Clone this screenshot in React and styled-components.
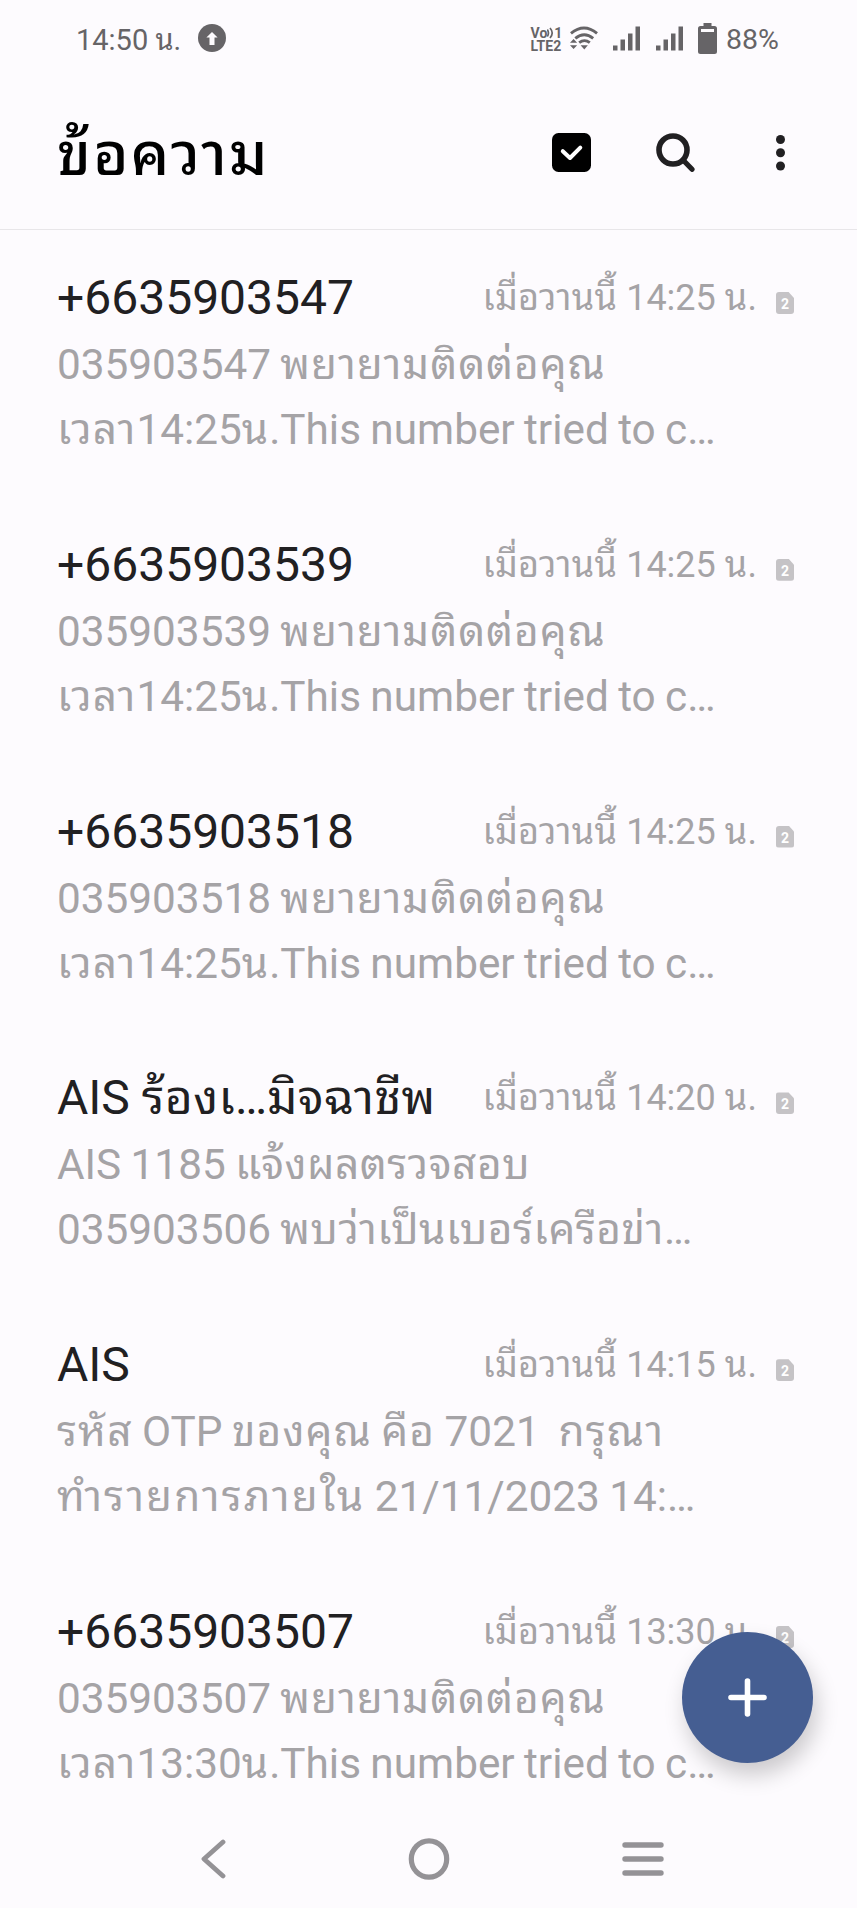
import React from "react";
import styled, { createGlobalStyle } from "styled-components";

const messages = [
  {
    name: "+6635903547",
    time: "14:25",
    lines: [
      { text: "035903547 พยายามติดต่อคุณ", tracking: 0.95 },
      { text: "เวลา14:25น.This number tried to c…", tracking: 1.05 },
    ],
  },
  {
    name: "+6635903539",
    time: "14:25",
    lines: [
      { text: "035903539 พยายามติดต่อคุณ", tracking: 0.95 },
      { text: "เวลา14:25น.This number tried to c…", tracking: 1.05 },
    ],
  },
  {
    name: "+6635903518",
    time: "14:25",
    lines: [
      { text: "035903518 พยายามติดต่อคุณ", tracking: 0.95 },
      { text: "เวลา14:25น.This number tried to c…", tracking: 1.05 },
    ],
  },
  {
    name: "AIS ร้องเ…มิจฉาชีพ",
    time: "14:20",
    lines: [
      { text: "AIS 1185 แจ้งผลตรวจสอบ", tracking: 0.55 },
      { text: "035903506 พบว่าเป็นเบอร์เครือข่า…", tracking: 0.55 },
    ],
  },
  {
    name: "AIS",
    time: "14:15",
    lines: [
      { text: "รหัส OTP ของคุณ คือ 7021  กรุณา", tracking: 1.15 },
      { text: "ทำรายการภายใน 21/11/2023 14:…", tracking: 2.1 },
    ],
  },
  {
    name: "+6635903507",
    time: "13:30",
    lines: [
      { text: "035903507 พยายามติดต่อคุณ", tracking: 0.95 },
      { text: "เวลา13:30น.This number tried to c…", tracking: 1.05 },
    ],
  },
];

const Mixed = ({ text, tracking = 0 }) =>
  text.split(/([\u0E00-\u0E7F]+)/).map((part, i) =>
    i % 2 ? <Thai key={i} $tracking={tracking}>{part}</Thai> : part
  );

const Signal = () => (
  <svg width="27" height="25" viewBox="0 0 27 25" fill="#666467">
    <rect x="0" y="19.5" width="4.5" height="5" />
    <rect x="7.5" y="13.5" width="4.5" height="11" />
    <rect x="15" y="7.5" width="4.5" height="17" />
    <rect x="22.5" y="0.5" width="4.5" height="24" />
  </svg>
);

const Wifi = () => (
  <svg width="28" height="25" viewBox="0 0 29 25" fill="none" stroke="#666467" strokeWidth="3">
    <path d="M1 7.2 Q14.5 -3.8 28 7.2" />
    <path d="M5.5 12.4 Q14.8 4.8 24 12.4" />
    <path d="M9.5 16.8 Q15 12.6 20.5 16.8" />
    <path d="M11 19.5 H18.5 L14.8 24 Z" fill="#666467" stroke="none" />
    <path d="M0 17 L3.7 13 L7.4 17 Z M0 19.5 H7.4 L3.7 23.5 Z" fill="#666467" stroke="none" />
  </svg>
);

const Volte = () => (
  <VolteBox>
    <VolteLine>
      Vo
      <svg width="7" height="12" viewBox="0 0 7 12" fill="none" stroke="#666467" strokeWidth="1.7">
        <path d="M0.3 2.5 Q2.6 6 0.3 9.5 M3 1 Q7.4 6 3 11" />
      </svg>
      <span>1</span>
    </VolteLine>
    <VolteLine>LTE2</VolteLine>
  </VolteBox>
);

const App = () => {
  return (
    <Screen>
      <GlobalStyle />
      <StatusBar>
        <Clock><Mixed text="14:50 น." /></Clock>
        <svg width="28" height="28" viewBox="0 0 28 28">
          <circle cx="14" cy="14" r="14" fill="#666467" />
          <path d="M14 8 L19.6 13.6 H16.5 V21 H11.5 V13.6 H8.4 Z" fill="#fdfbfe" />
        </svg>
        <StatusIcons>
          <Volte />
          <Wifi />
          <Signal />
          <Signal />
          <svg width="19" height="31" viewBox="0 0 19 31" fill="#666467">
            <path d="M5.5 0 H13.5 V3 H16.5 Q19 3 19 5.5 V28.5 Q19 31 16.5 31 H2.5 Q0 31 0 28.5 V5.5 Q0 3 2.5 3 H5.5 Z" />
            <rect x="3" y="6" width="13" height="3" fill="#fdfbfe" />
          </svg>
          <Battery>88%</Battery>
        </StatusIcons>
      </StatusBar>
      <Header>
        <Title>ข้อความ</Title>
        <Actions>
          <svg width="39" height="39" viewBox="0 0 39 39">
            <rect width="39" height="39" rx="6.5" fill="#000" />
            <path d="M10.8 18.2 L18 25 L28.3 14.7" fill="none" stroke="#fff" strokeWidth="4" strokeLinecap="round" strokeLinejoin="round" />
          </svg>
          <svg width="39" height="39" viewBox="0 0 39 39" fill="none" stroke="#212022">
            <circle cx="17" cy="17" r="14" strokeWidth="5.6" />
            <path d="M27.5 27.5 L36 36.3" strokeWidth="5.2" strokeLinecap="round" />
          </svg>
          <MoreIcon width="9" height="36" viewBox="0 0 9 36" fill="#212022">
            <circle cx="4.5" cy="4.5" r="4.5" />
            <circle cx="4.5" cy="17.8" r="4.5" />
            <circle cx="4.5" cy="31" r="4.5" />
          </MoreIcon>
        </Actions>
      </Header>
      <List>
        {messages.map((message) => (
          <Message key={message.name}>
            <TopLine>
              <Name><Mixed text={message.name} tracking={0.35} /></Name>
              <Time><Mixed text={`เมื่อวานนี้ ${message.time} น.`} tracking={0.3} /></Time>
              <SimBadge>2</SimBadge>
            </TopLine>
            {message.lines.map((line) => (
              <Preview key={line.text}><Mixed text={line.text} tracking={line.tracking} /></Preview>
            ))}
          </Message>
        ))}
      </List>
      <Compose>
        <svg width="39" height="39" viewBox="0 0 39 39" stroke="#fff" strokeWidth="5.6" strokeLinecap="round">
          <path d="M19.5 3 V36 M3 19.5 H36" />
        </svg>
      </Compose>
      <NavBar>
        <svg width="25" height="40" viewBox="0 0 25 40" fill="none" stroke="#949296" strokeWidth="4.8" strokeLinecap="round" strokeLinejoin="round">
          <path d="M22 3 L3 20 L22 37" />
        </svg>
        <HomeIcon width="42" height="44" viewBox="0 0 42 44" fill="none" stroke="#949296" strokeWidth="5.2">
          <ellipse cx="21" cy="22" rx="17.7" ry="18.2" />
        </HomeIcon>
        <svg width="42" height="34" viewBox="0 0 42 34" stroke="#949296" strokeWidth="5.4" strokeLinecap="round">
          <path d="M3 3 H39 M3 17 H39 M3 31 H39" />
        </svg>
      </NavBar>
    </Screen>
  );
};

const GlobalStyle = createGlobalStyle`
  *{
    box-sizing: border-box;
    margin: 0;
    padding: 0;
  }
  body{
    background: #fdfbfe;
    font-family: Roboto, "Noto Sans Thai Looped", "Noto Sans Thai", "Noto Sans", sans-serif;
  }
  svg{
    display: block;
    flex: none;
  }
`;

const Screen = styled.div`
  position: relative;
  display: flex;
  flex-direction: column;
  width: 857px;
  height: 1908px;
  overflow: hidden;
  background: #fdfbfe;
`;

const Thai = styled.span`
  letter-spacing: ${({ $tracking }) => $tracking}px;
  white-space: pre;
`;

const StatusBar = styled.div`
  display: flex;
  align-items: center;
  height: 76px;
  padding: 0 78px 0 76px;
  color: #666467;
`;

const Clock = styled.div`
  width: 122px;
  padding-top: 3px;
  font-size: 29px;
  line-height: 40px;
  white-space: pre;
`;

const StatusIcons = styled.div`
  display: flex;
  align-items: center;
  margin-left: auto;
  gap: 15.5px;
`;

const VolteBox = styled.div`
  width: 31px;
  margin-right: -7.5px;
  padding-top: 3px;
  font-size: 14px;
  font-weight: 700;
  line-height: 13px;
`;

const VolteLine = styled.div`
  display: flex;
  align-items: center;
  justify-content: space-between;
  height: 13px;
`;

const Battery = styled.div`
  margin-left: -6.5px;
  padding-top: 3px;
  font-size: 28.5px;
`;

const Header = styled.header`
  display: flex;
  align-items: center;
  height: 154px;
  padding: 0 72px 0 57px;
  border-bottom: 1px solid #e8e6e9;
`;

const Title = styled.h1`
  padding-top: 4px;
  font-size: 60px;
  font-weight: 500;
  letter-spacing: 2px;
  line-height: 80px;
  color: #000;
`;

const Actions = styled.div`
  display: flex;
  align-items: center;
  margin-left: auto;
  gap: 65px;
`;

const MoreIcon = styled.svg`
  margin-left: 16px;
`;

const List = styled.main`
  flex: 1;
  min-height: 0;
`;

const Message = styled.article`
  height: 266.8px;
  padding: 36px 63px 0 57px;
`;

const TopLine = styled.div`
  display: flex;
  align-items: center;
  height: 64px;
  margin-bottom: 2px;
`;

const Name = styled.h2`
  font-size: 48px;
  font-weight: 400;
  line-height: 64px;
  color: #212022;
  white-space: pre;
`;

const Time = styled.time`
  margin-left: auto;
  font-size: 36px;
  line-height: 60px;
  color: #a5a3a6;
  white-space: pre;
`;

const SimBadge = styled.span`
  width: 18px;
  height: 22px;
  margin: 10px 0 0 19px;
  border-radius: 3px;
  clip-path: polygon(0 0, 70% 0, 100% 27%, 100% 100%, 0 100%);
  background: #c5c3c6;
  color: #fff;
  font-size: 14px;
  font-weight: 700;
  line-height: 24px;
  text-align: center;
`;

const Preview = styled.p`
  height: 65px;
  font-size: 42.3px;
  line-height: 65px;
  word-spacing: -1.1px;
  color: #a5a3a6;
  white-space: pre;
`;

const Compose = styled.button`
  position: absolute;
  right: 44px;
  bottom: 145px;
  display: flex;
  align-items: center;
  justify-content: center;
  width: 131px;
  height: 131px;
  border: none;
  border-radius: 50%;
  background: #455e92;
  box-shadow: 4px 12px 22px rgba(0, 0, 0, 0.2);
`;

const NavBar = styled.nav`
  display: flex;
  align-items: center;
  justify-content: space-between;
  height: 99px;
  padding: 0 193px 0 201px;
`;

const HomeIcon = styled.svg`
  margin-left: 10px;
`;

export default App;
